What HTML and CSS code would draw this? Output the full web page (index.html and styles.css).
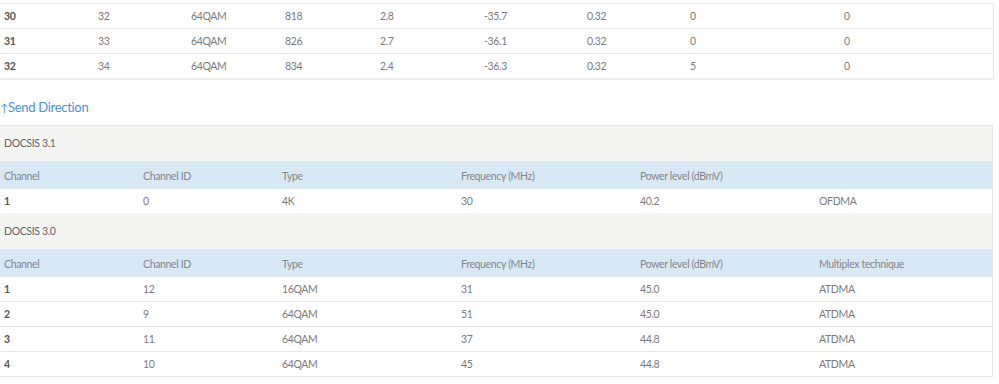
FILE: index.html
```html
<!DOCTYPE html>
<html>
<head>
<meta charset="utf-8">
<link rel="stylesheet" href="styles.css">
</head>
<body>
<div class="page">
  <table class="grid down">
    <colgroup>
      <col class="d1"><col class="d2"><col class="d3"><col class="d4"><col class="d5"><col class="d6"><col class="d7"><col class="d8"><col class="d9">
    </colgroup>
    <tbody>
      <tr><td class="b">30</td><td>32</td><td>64QAM</td><td>818</td><td>2.8</td><td>-35.7</td><td>0.32</td><td>0</td><td>0</td></tr>
      <tr><td class="b">31</td><td>33</td><td>64QAM</td><td>826</td><td>2.7</td><td>-36.1</td><td>0.32</td><td>0</td><td>0</td></tr>
      <tr><td class="b">32</td><td>34</td><td>64QAM</td><td>834</td><td>2.4</td><td>-36.3</td><td>0.32</td><td>5</td><td>0</td></tr>
    </tbody>
  </table>

  <h3 class="dir"><span class="arrow">↑</span>Send Direction</h3>

  <div class="panel">
    <div class="caption">DOCSIS 3.1</div>
    <table class="grid up">
      <colgroup>
        <col class="u1"><col class="u2"><col class="u3"><col class="u4"><col class="u5"><col class="u6">
      </colgroup>
      <thead>
        <tr><th>Channel</th><th>Channel ID</th><th>Type</th><th>Frequency (MHz)</th><th>Power level (dBmV)</th><th></th></tr>
      </thead>
      <tbody>
        <tr><td class="b">1</td><td>0</td><td>4K</td><td>30</td><td>40.2</td><td>OFDMA</td></tr>
      </tbody>
    </table>
    <div class="caption second">DOCSIS 3.0</div>
    <table class="grid up">
      <colgroup>
        <col class="u1"><col class="u2"><col class="u3"><col class="u4"><col class="u5"><col class="u6">
      </colgroup>
      <thead>
        <tr><th>Channel</th><th>Channel ID</th><th>Type</th><th>Frequency (MHz)</th><th>Power level (dBmV)</th><th>Multiplex technique</th></tr>
      </thead>
      <tbody>
        <tr><td class="b">1</td><td>12</td><td>16QAM</td><td>31</td><td>45.0</td><td>ATDMA</td></tr>
        <tr><td class="b">2</td><td>9</td><td>64QAM</td><td>51</td><td>45.0</td><td>ATDMA</td></tr>
        <tr><td class="b">3</td><td>11</td><td>64QAM</td><td>37</td><td>44.8</td><td>ATDMA</td></tr>
        <tr><td class="b">4</td><td>10</td><td>64QAM</td><td>45</td><td>44.8</td><td>ATDMA</td></tr>
      </tbody>
    </table>
  </div>
</div>
</body>
</html>
```

FILE: styles.css
```css
html, body {
  margin: 0;
  padding: 0;
  background: #ffffff;
}
body {
  font-family: "Lato", "Open Sans", sans-serif;
  font-size: 10.5px;
  letter-spacing: -0.35px;
  color: #7a7a7a;
}
.page {
  width: 993px;
  padding-top: 3px;
}
.grid {
  width: 993px;
  border-collapse: collapse;
  table-layout: fixed;
}
.grid td, .grid th {
  padding: 0 4px;
  text-align: left;
  font-weight: normal;
  white-space: nowrap;
}
.grid td {
  height: 24px;
  border-bottom: 1px solid #e8e8e8;
}
.grid td.b {
  font-weight: bold;
  color: #555555;
}
.down {
  border-top: 1px solid #e8e8e8;
  border-right: 1px solid #e8e8e8;
}
.down tr:last-child td {
  border-bottom: 2px solid #ececec;
}
.d1 { width: 94px; }
.d2 { width: 93px; }
.d3 { width: 94px; }
.d4 { width: 95px; }
.d5 { width: 104px; }
.d6 { width: 103px; }
.d7 { width: 103px; }
.d8 { width: 154px; }
.d9 { width: 153px; }

.dir {
  margin: 15px 0 0 0;
  height: 30px;
  font-size: 13px;
  letter-spacing: -0.3px;
  font-weight: normal;
  color: #4a90e2;
  line-height: 24px;
}
.arrow {
  display: inline-block;
  font-size: 11px;
  width: 8px;
}
.panel {
  width: 992px;
  border-top: 1px solid #e6e6e6;
  border-right: 1px solid #e6e6e6;
  border-bottom: 1px solid #e6e6e6;
}
.caption {
  height: 35px;
  line-height: 35px;
  padding-left: 4px;
  background: #f5f5f3;
  color: #666666;
  border-bottom: 1px solid #ebe8e2;
}
.caption.second {
  height: 36px;
  line-height: 36px;
}
.up {
  width: 992px;
}
.up th {
  height: 27px;
  background: #d9e8f5;
  color: #80868e;
}
.up tr:last-child td {
  border-bottom: none;
}
.u1 { width: 139px; }
.u2 { width: 139px; }
.u3 { width: 179px; }
.u4 { width: 179px; }
.u5 { width: 179px; }
.u6 { width: 177px; }
```
